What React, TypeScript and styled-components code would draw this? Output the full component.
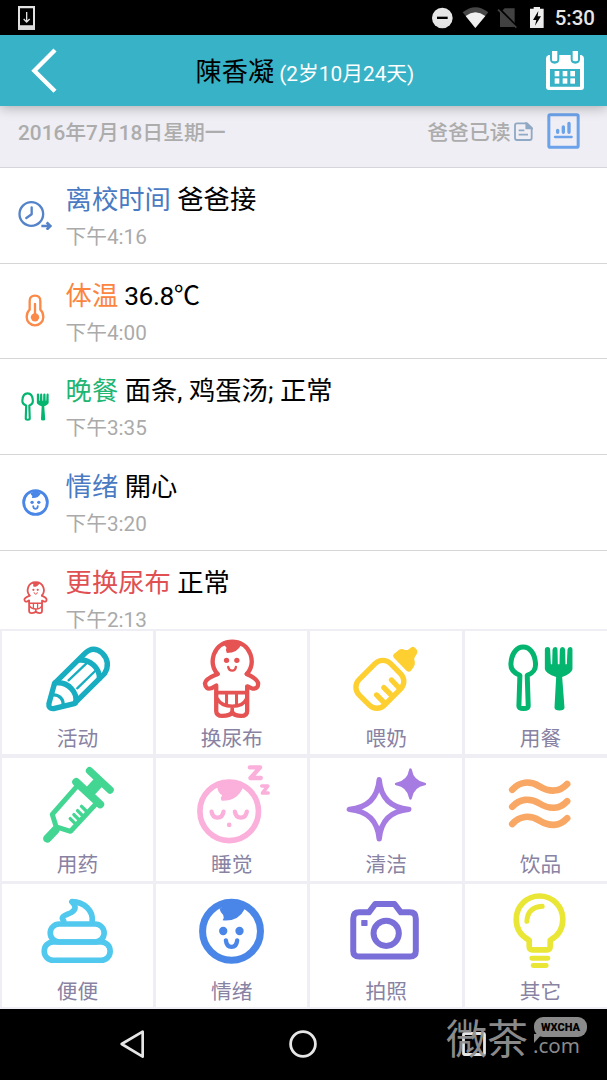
import React from 'react';
import styled, { createGlobalStyle } from 'styled-components';

const GlobalStyle = createGlobalStyle`
  * { box-sizing: border-box; }
  body {
    margin: 0;
    background: #000;
    font-family: Roboto, 'Noto Sans CJK SC', sans-serif;
    overflow: hidden;
  }
  svg { display: block; flex: none; }
`;

const Screen = styled.div`
  position: relative;
  width: 607px;
  height: 1080px;
  display: flex;
  flex-direction: column;
  overflow: hidden;
  background: #fff;
`;

const StatusBar = styled.div`
  flex: none;
  height: 35.4px;
  padding: 0 12px 0 18px;
  display: flex;
  align-items: center;
  background: #000;
`;

const StatusIcons = styled.div`
  margin-left: auto;
  display: flex;
  align-items: center;
`;

const Clock = styled.span`
  margin-left: 10.5px;
  font-size: 20.5px;
  font-weight: 500;
  line-height: 36px;
  color: #e6e6e6;
  padding-top: 1px;
`;

const Header = styled.header`
  flex: none;
  position: relative;
  z-index: 1;
  height: 70.8px;
  padding: 0 23px 0 31px;
  display: flex;
  align-items: center;
  justify-content: space-between;
  background: #37b2c6;
  box-shadow: 0 1px 12px rgba(0, 0, 0, 0.32);
`;

const Title = styled.h1`
  margin: 0 0 0 7px;
  padding-top: 4px;
  font-size: 26.2px;
  font-weight: 400;
  line-height: 40px;
  color: #000;
  white-space: nowrap;
`;

const Age = styled.span`
  margin-left: 5px;
  font-size: 20.8px;
  color: #fff;
`;

const DayBar = styled.div`
  flex: none;
  height: 61.8px;
  padding: 0 27.5px 11px 18px;
  display: flex;
  align-items: center;
  background: #efeef4;
  border-bottom: 1px solid #d6d6da;
  font-size: 20.8px;
  font-weight: 500;
  color: #acacac;
`;

const ReadBy = styled.span`
  margin-left: auto;
  margin-right: 3px;
`;

const ReportButton = styled.div`
  margin-left: 14px;
`;

const Log = styled.div`
  flex: none;
  height: 461px;
  overflow: hidden;
`;

const Entry = styled.div`
  height: 95.67px;
  display: flex;
  border-bottom: 1px solid #d6d6d6;
`;

const EntryIcon = styled.div`
  width: 65.6px;
  padding-left: 5px;
  display: flex;
  align-items: center;
  justify-content: center;
`;

const EntryBody = styled.div`
  padding-top: 12px;
`;

const EntryText = styled.div<{ $tight?: boolean }>`
  font-size: 26.3px;
  line-height: 40px;
  letter-spacing: ${(p) => (p.$tight ? '-0.45px' : 'normal')};
  color: #000;
  white-space: nowrap;
`;

const Kind = styled.span<{ $color: string }>`
  letter-spacing: normal;
  color: ${(p) => p.$color};
`;

const Time = styled.div`
  font-size: 20.7px;
  line-height: 35px;
  color: #aaa;
`;

const Actions = styled.div`
  flex: none;
  height: 380px;
  padding: 2.3px 0 0 1.7px;
  display: grid;
  grid-template-columns: repeat(4, 151.4px);
  grid-auto-rows: 123.2px;
  gap: 3.3px 3px;
  background: #efeef4;
  overflow: hidden;
`;

const Action = styled.div`
  display: flex;
  flex-direction: column;
  align-items: center;
  background: #fff;
`;

const ActionLabel = styled.span`
  font-size: 20.7px;
  line-height: 28px;
  color: #8882a3;
`;

const NavBar = styled.div`
  flex: 1;
  padding: 0 48px 0 47px;
  display: flex;
  background: #000;
`;

const NavSlot = styled.div`
  flex: 1;
  display: flex;
  align-items: center;
  justify-content: center;
`;

const Watermark = styled.div`
  position: absolute;
  left: 446px;
  top: 1013px;
  display: flex;
  color: #929292;
  opacity: 0.95;
`;

const WatermarkName = styled.span`
  width: 86px;
  font-family: 'Noto Sans CJK SC', sans-serif;
  font-size: 41px;
  font-weight: 400;
  line-height: 46px;
  white-space: nowrap;
`;

const WatermarkSide = styled.div`
  display: flex;
  flex-direction: column;
  padding-top: 4px;
`;

const Bubble = styled.span`
  position: relative;
  margin-left: 2px;
  width: 53px;
  height: 20px;
  border-radius: 9px;
  background: #929292;
  color: #000;
  font-size: 11px;
  font-weight: 900;
  line-height: 21px;
  letter-spacing: 0;
  text-align: center;
  &::after {
    content: '';
    position: absolute;
    left: 0;
    top: 17px;
    border-top: 9px solid #929292;
    border-right: 8px solid transparent;
  }
`;

const Domain = styled.span`
  margin-left: 1px;
  font-family: 'Noto Sans', sans-serif;
  font-size: 20.5px;
  line-height: 17px;
`;

interface StrokeProps {
  color: string;
  width: number;
  children: React.ReactNode;
}

const Stroke = ({ color, width, children }: StrokeProps) => (
  <g fill="none" stroke={color} strokeWidth={width} strokeLinecap="round" strokeLinejoin="round">
    {children}
  </g>
);

const Pencil = () => (
  <Stroke color="#18adc1" width={16}>
    <path d="M163 167L252 79Q278 53 305 75Q334 104 313 138L222 228L160 243Q144 244 146 228Z" />
    <path d="M238 97C270 95 298 120 298 152" />
    <path d="M165 166C203 160 234 195 226 226" />
    <path d="M156 202C178 200 192 216 188 236" strokeWidth={10} />
    <path d="M205 158L262 104M231 182L288 127" strokeWidth={7} />
  </Stroke>
);

const DiaperBaby = () => (
  <>
    <Stroke color="#e55353" width={13}>
      <path d="M653 139C637 121 636 98 642 80C652 52 676 42 697 42S742 52 752 80C758 98 757 121 741 139" />
      <path d="M653 139Q616 154 615 167Q617 187 634 182L649 174V250Q649 265 668 265Q690 265 697 254Q704 265 724 265Q742 265 742 250V176L758 183Q775 185 775 168Q774 154 741 139" />
      <path d="M650 195H742M652 214Q664 236 697 236T740 214M697 236V254" strokeWidth={11} />
      <path d="M680 196V230M710 196V230" strokeWidth={9} />
      <path d="M685 118Q687 129 697 129T708 118" strokeWidth={7} />
    </Stroke>
    <g fill="#e55353">
      <path d="M670 48L680 60Q675 68 681 76Q713 76 724 50Q698 34 670 48Z" />
      <circle cx="680" cy="98" r="8" />
      <circle cx="711" cy="98" r="8" />
    </g>
  </>
);

const Bottle = () => (
  <>
    <Stroke color="#fdcf31" width={16}>
      <rect x="175.5" y="116" width="133" height="108" rx="32" transform="rotate(-45 242 170)" />
      <path d="M232 202L254 224M254 180L276 202M277 157L297 178" />
    </Stroke>
    <path
      fill="#fdcf31"
      d="M284 79L300 66Q309 62 317 67L326 67L338 58Q346 54 354 68Q357 76 347 88L345 95Q350 108 344 117L335 130Q329 135 322 129L284 90Q279 84 284 79Z"
    />
  </>
);

const Cutlery = () => (
  <>
    <Stroke color="#03b56f" width={15}>
      <path d="M658 235L661 143C642 136 633 126 634 108C636 76 652 58 671 58S706 76 708 108C709 126 702 136 683 143L686 235Q686 243 672 243T658 235Z" />
    </Stroke>
    <path
      fill="#03b56f"
      d="M736 66Q736 58 744 58T752 66L754 110H758L759 66Q760 58 767 58T774 66L775 110H780L781 66Q782 58 789 58T797 66L798 110H802L804 66Q805 58 812 58T819 66V124Q817 138 788 148L795 240Q795 249 780 249T765 240L770 148Q738 138 736 124Z"
    />
  </>
);

const Syringe = () => (
  <Stroke color="#42d692" width={15}>
    <path d="M232 92L156 178L168 216L211 229L292 142" />
    <path d="M141 251L166 225" strokeWidth={25} />
    <path d="M228 81L300 148" strokeWidth={24} />
    <path d="M267 112L297 80" strokeWidth={34} strokeLinecap="butt" />
    <path d="M268 47L330 105" strokeWidth={22} />
    <path d="M244 154L258 168M232 167L246 181M221 179L235 193M210 191L226 207" strokeWidth={10} />
  </Stroke>
);

const SleepingBaby = () => (
  <>
    <Stroke color="#fbafdb" width={17}>
      <circle cx="688" cy="169" r="88" />
      <path d="M635 170Q638 188 653 188T671 170M705 170Q708 188 723 188T741 170" strokeWidth={13} />
      <path d="M750 37H781L752 69H783" strokeWidth={13} />
      <path d="M786 93H804L788 114H805" strokeWidth={11} />
    </Stroke>
    <g fill="#fbafdb">
      <path d="M652 96Q690 60 729 98Q712 138 666 137Q659 132 667 121Q654 114 652 96Z" />
      <circle cx="688" cy="210" r="7" />
    </g>
  </>
);

const Sparkles = () => (
  <>
    <Stroke color="#a67be2" width={16}>
      <path d="M240 74Q247 156 329 163Q247 170 240 252Q233 170 150 163Q233 156 240 74Z" />
    </Stroke>
    <path
      fill="#a67be2"
      stroke="#a67be2"
      strokeWidth={8}
      strokeLinejoin="round"
      d="M334 44Q340 81 377 87Q340 93 334 130Q328 93 291 87Q328 81 334 44Z"
    />
  </>
);

const Waves = () => (
  <Stroke color="#f9a764" width={20}>
    {[0, 51.5, 103].map((dy) => (
      <path key={dy} d={`M638 ${104 + dy}c22-24 52-28 82-10s60 18 83-7`} />
    ))}
  </Stroke>
);

const Swirl = () => (
  <Stroke color="#51c8ee" width={17}>
    <rect x="132" y="186" width="198" height="55" rx="27" />
    <rect x="150" y="132" width="162" height="54" rx="27" />
    <path d="M190 122C178 107 200 105 214 97C230 87 226 76 215 65C252 66 280 92 276 124" />
  </Stroke>
);

const BabyFace = () => (
  <>
    <Stroke color="#4a86e8" width={21}>
      <circle cx="695" cy="154" r="87" />
      <path d="M678 181Q680 201 695 201T712 181" strokeWidth={13} />
    </Stroke>
    <g fill="#4a86e8">
      <path d="M659 86Q695 60 735 86Q715 126 668 121Q674 113 670 105Q662 99 659 86Z" />
      <circle cx="670" cy="153" r="12.5" />
      <circle cx="719" cy="153" r="12.5" />
    </g>
  </>
);

const Camera = () => (
  <>
    <Stroke color="#7a6fd8" width={18}>
      <path d="M180 97H209L228 72H286L305 97H332Q350 97 350 116V213Q350 230 332 230H180Q162 230 162 213V116Q162 97 180 97Z" />
      <circle cx="261" cy="160" r="38" />
    </Stroke>
    <rect x="186" y="120" width="19" height="18" rx="2" fill="#7a6fd8" />
  </>
);

const Bulb = () => (
  <Stroke color="#e9e636" width={17}>
    <path d="M689 181Q650 161 650 118A70 70 0 0 1 790 118Q790 161 752 181V200Q752 210 742 210H699Q689 210 689 200Z" />
    <path d="M682 124Q684 82 728 79" strokeWidth={15} />
    <path d="M697 235H745M701 257H740" strokeWidth={15} />
  </Stroke>
);

const LeaveClock = () => (
  <Stroke color="#5583c9" width={7}>
    <circle cx="96" cy="149" r="35.5" />
    <path d="M97 129V150L81 161" />
    <path d="M126 185H152M142 174L153 185L142 196" strokeWidth={8} strokeLinecap="butt" strokeLinejoin="miter" />
  </Stroke>
);

const Thermometer = () => (
  <>
    <Stroke color="#fb8a49" width={7}>
      <path d="M90 433V407Q90 391 106 391T122 407V433Q131 441 131 455A25 25 0 0 1 81 455Q81 441 90 433Z" />
      <path d="M106 416V455" />
    </Stroke>
    <circle cx="106" cy="456" r="12.5" fill="#fb8a49" />
  </>
);

const entries = [
  { kind: '离校时间', text: '爸爸接', time: '下午4:16', color: '#4a7ac2', Icon: LeaveClock, w: 34, h: 30, box: '56 107 102 90' },
  { kind: '体温', text: '36.8℃', time: '下午4:00', color: '#fb853f', Icon: Thermometer, w: 20, h: 33, box: '76 386 60 99', tight: true },
  { kind: '晚餐', text: '面条, 鸡蛋汤; 正常', time: '下午3:35', color: '#1fb573', Icon: Cutlery, w: 28, h: 29, box: '625 48 196 204' },
  { kind: '情绪', text: '開心', time: '下午3:20', color: '#4a7ac2', Icon: BabyFace, w: 27, h: 27, box: '596 55 198 198' },
  { kind: '更换尿布', text: '正常', time: '下午2:13', color: '#e04f52', Icon: DiaperBaby, w: 25, h: 33, box: '607 34 176 238' },
];

const actions = [
  { label: '活动', Icon: Pencil, x: 5, y: 10 },
  { label: '换尿布', Icon: DiaperBaby, x: 468, y: 10 },
  { label: '喂奶', Icon: Bottle, x: 32, y: 10 },
  { label: '用餐', Icon: Cutlery, x: 496, y: 10 },
  { label: '用药', Icon: Syringe, x: 5, y: 9 },
  { label: '睡觉', Icon: SleepingBaby, x: 468, y: 9 },
  { label: '清洁', Icon: Sparkles, x: 32, y: 9 },
  { label: '饮品', Icon: Waves, x: 496, y: 9 },
  { label: '便便', Icon: Swirl, x: 5, y: 12 },
  { label: '情绪', Icon: BabyFace, x: 468, y: 12 },
  { label: '拍照', Icon: Camera, x: 32, y: 12 },
  { label: '其它', Icon: Bulb, x: 496, y: 12 },
];

const DownloadIcon = () => (
  <svg width="17" height="24" viewBox="54 17 51 72">
    <path fill="#e2e2e2" fillRule="evenodd" d="M54 17H105V89H54ZM60 24V75H99V24Z" />
    <path d="M80 35V64M71 56L80 65L89 56" fill="none" stroke="#e2e2e2" strokeWidth="4" />
  </svg>
);

const StatusGlyphs = () => (
  <svg width="112" height="24" viewBox="387 18 336 72">
    <circle cx="418" cy="54" r="31" fill="#e6e6e6" />
    <rect x="402" y="50" width="32" height="7" fill="#000" />
    <path d="M479 37Q517 6 556 37L517 84Z" fill="#474747" />
    <path d="M488 48Q517 26 547 48L517 84Z" fill="#f0f0f0" />
    <path d="M605 25H635V81H591V39Z" fill="#424242" />
    <path d="M588 26L642 81" stroke="#000" strokeWidth="8" />
    <path d="M585 29L640 83" stroke="#424242" strokeWidth="5" />
    <path d="M681 26H692V21H711V26H722V84H681Z" fill="#eee" />
    <path d="M706 33L690 60H700L696 77L714 49H704Z" fill="#000" />
  </svg>
);

const CalendarIcon = () => (
  <svg width="38" height="39" viewBox="729 156 114 117">
    <path
      fill="#fff"
      fillRule="evenodd"
      d="M737 168H741V180Q741 194 755 194T769 180V168H803V180Q803 194 817 194T831 180V168H835Q843 170 843 178V264Q843 273 834 273H738Q729 273 729 264V178Q729 170 737 168ZM741 210V263H831V210Z"
    />
    <path fill="#fff" d="M747 156H763V184Q763 187 755 187T747 184ZM809 156H825V184Q825 187 817 187T809 184Z" />
    {[216, 238].map((y) =>
      [755, 779, 802].map((x) => <rect key={`${x}-${y}`} x={x} y={y} width="14" height="16" fill="#fff" />)
    )}
  </svg>
);

const NoteIcon = () => (
  <svg width="19" height="19" viewBox="629 367 57 57" fill="none" stroke="#8fa9c4" strokeWidth="5.5">
    <path d="M638 371H668L682 385V415Q682 421 676 421H638Q632 421 632 415V377Q632 371 638 371Z" />
    <path d="M666 371V386H682Z" fill="#8fa9c4" />
    <path d="M643 392H660M643 405H671" />
  </svg>
);

const ReportIcon = () => (
  <svg width="33" height="36" viewBox="730 339 99 108" fill="none" stroke="#6ba2ea">
    <rect x="735.5" y="344" width="88" height="98" rx="4" strokeWidth="9" />
    <path d="M762 391V397M779 381V397M796 370V397" strokeWidth="10" strokeLinecap="round" />
    <path d="M754 411H804" strokeWidth="7" strokeLinecap="round" />
  </svg>
);

export default function App() {
  return (
    <>
      <GlobalStyle />
      <Screen>
        <StatusBar>
          <DownloadIcon />
          <StatusIcons>
            <StatusGlyphs />
            <Clock>5:30</Clock>
          </StatusIcons>
        </StatusBar>
        <Header>
          <svg width="26" height="46" viewBox="93 146 78 138">
            <path d="M165 152L103 214L165 276" fill="none" stroke="#fff" strokeWidth="13" />
          </svg>
          <Title>
            陳香凝
            <Age>(2岁10月24天)</Age>
          </Title>
          <CalendarIcon />
        </Header>
        <DayBar>
          <span>2016年7月18日星期一</span>
          <ReadBy>爸爸已读</ReadBy>
          <NoteIcon />
          <ReportButton>
            <ReportIcon />
          </ReportButton>
        </DayBar>
        <Log>
          {entries.map(({ kind, text, time, color, Icon, w, h, box, tight }) => (
            <Entry key={kind}>
              <EntryIcon>
                <svg width={w} height={h} viewBox={box}>
                  <Icon />
                </svg>
              </EntryIcon>
              <EntryBody>
                <EntryText $tight={tight}>
                  <Kind $color={color}>{kind}</Kind> {text}
                </EntryText>
                <Time>{time}</Time>
              </EntryBody>
            </Entry>
          ))}
        </Log>
        <Actions>
          {actions.map(({ label, Icon, x, y }) => (
            <Action key={label}>
              <svg width="151.4" height="93.3" viewBox={`${x} ${y} 455 280`}>
                <Icon />
              </svg>
              <ActionLabel>{label}</ActionLabel>
            </Action>
          ))}
        </Actions>
        <NavBar>
          <NavSlot>
            <svg width="24" height="28" viewBox="362 76 72 84">
              <path d="M367 118L430 81V156Z" fill="none" stroke="#e6e6e6" strokeWidth="8" strokeLinejoin="round" />
            </svg>
          </NavSlot>
          <NavSlot>
            <svg width="28" height="28" viewBox="0 0 28 28">
              <circle cx="14" cy="14" r="12.4" fill="none" stroke="#e6e6e6" strokeWidth="2.8" />
            </svg>
          </NavSlot>
          <NavSlot>
            <svg width="24" height="24" viewBox="0 0 24 24">
              <rect x="1.5" y="1.5" width="21" height="21" rx="1" fill="none" stroke="#e6e6e6" strokeWidth="2.8" />
            </svg>
          </NavSlot>
        </NavBar>
        <Watermark>
          <WatermarkName>微茶</WatermarkName>
          <WatermarkSide>
            <Bubble>WXCHA</Bubble>
            <Domain>.com</Domain>
          </WatermarkSide>
        </Watermark>
      </Screen>
    </>
  );
}
